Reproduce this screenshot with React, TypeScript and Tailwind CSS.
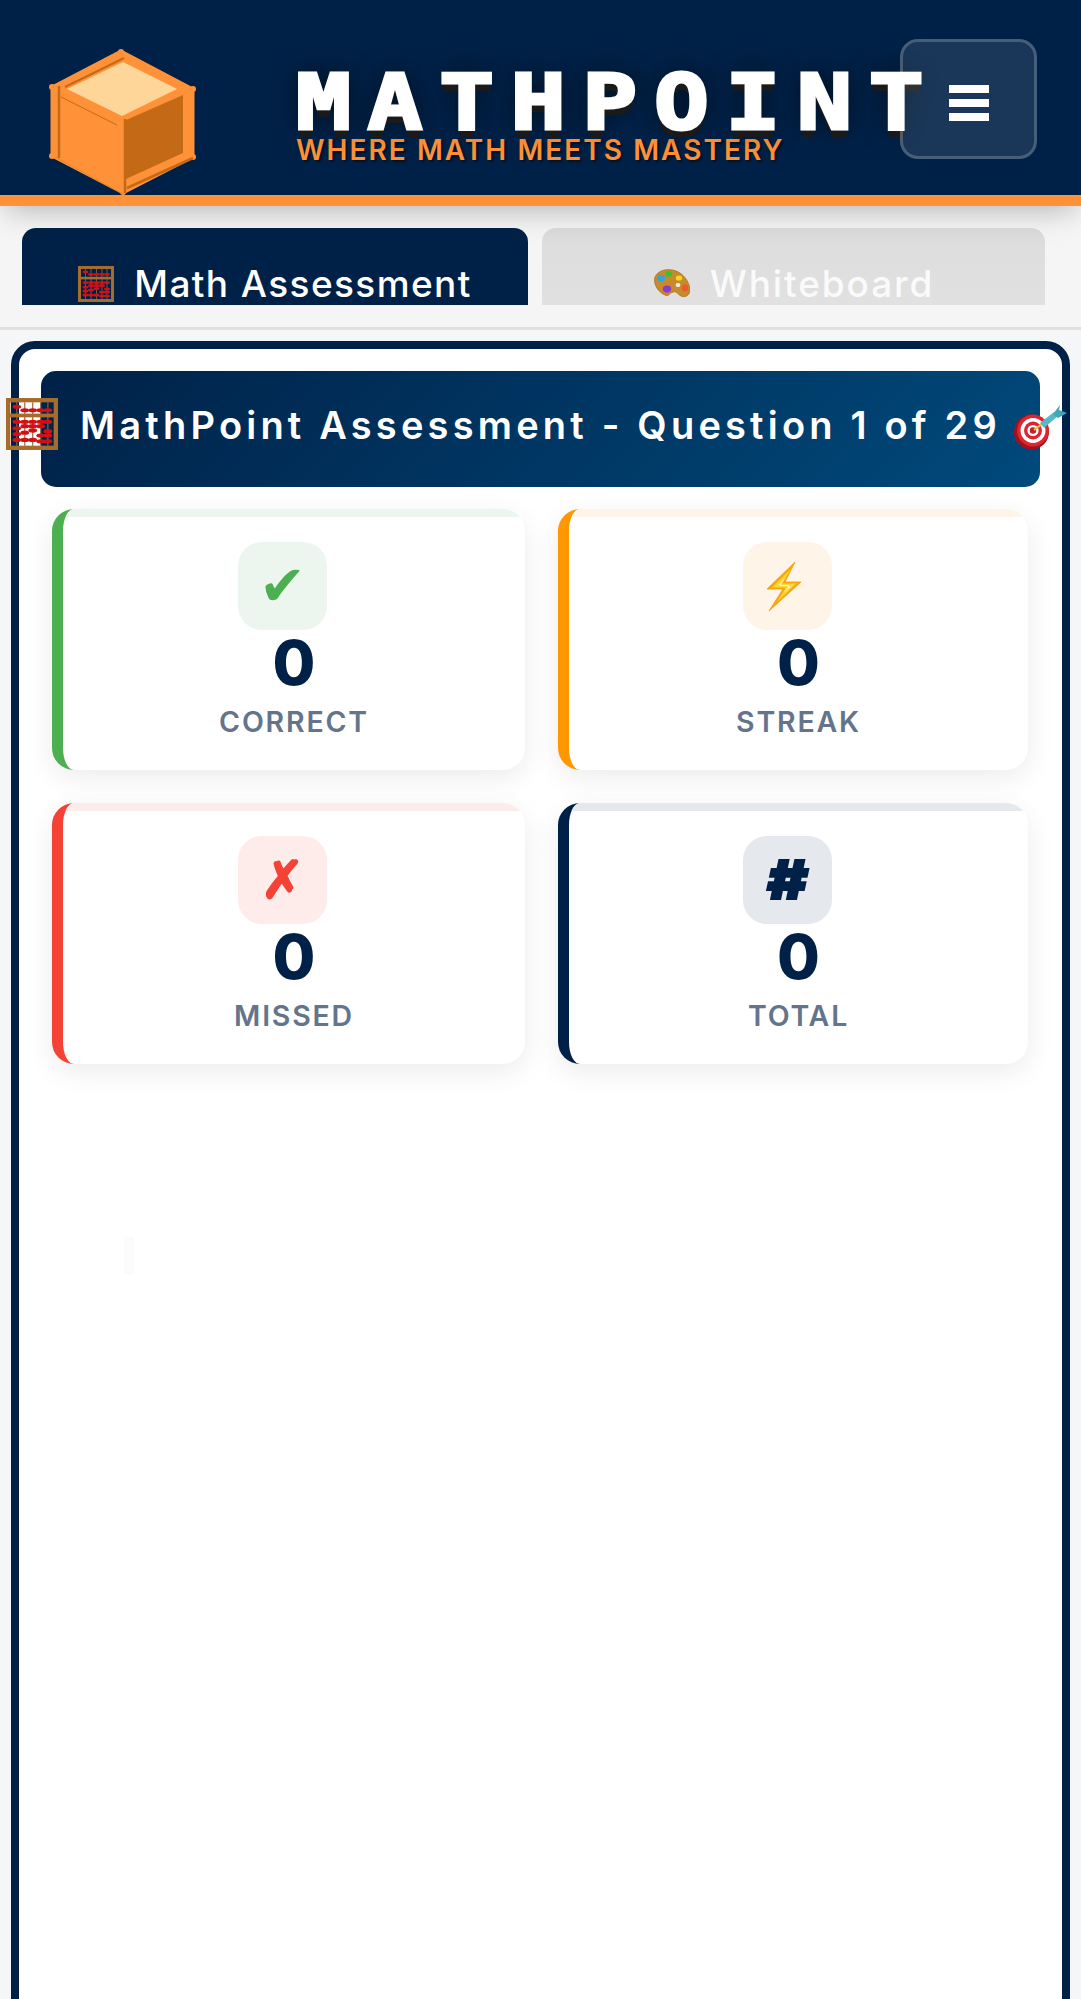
import React from "react";

const sans = "font-['Inter','Noto_Sans',sans-serif]";

function Cube() {
  return (
    <svg viewBox="0 0 148 148" className="w-[148px] h-[148px] block shrink-0">
      <polygon points="72,3 144,41 144,109 74,145 3,108 3,39" fill="#ff9238" stroke="#ff9238" strokeWidth="3" strokeLinejoin="round" />
      <polygon points="18,41 74,14 128,41 73,68" fill="#ffd699" />
      <polygon points="77,72 134,47 134,105 77,131" fill="#c46a17" />
      <circle cx="72" cy="4" r="3" fill="#ff9238" />
      <circle cx="3" cy="39" r="3" fill="#ff9238" />
      <circle cx="144" cy="41" r="3" fill="#ff9238" />
      <circle cx="3" cy="108" r="3" fill="#ff9238" />
      <circle cx="144" cy="109" r="3" fill="#ff9238" />
      <circle cx="74" cy="144" r="3" fill="#ff9238" />
      <g stroke="#c46a17" fill="none">
        <line x1="10" y1="38" x2="10" y2="110" strokeWidth="2.5" />
        <line x1="12" y1="49" x2="68" y2="77" strokeWidth="1" />
        <line x1="76" y1="71" x2="76" y2="145" strokeWidth="2.5" />
        <line x1="78" y1="140" x2="144" y2="110" strokeWidth="2.5" />
        <line x1="6" y1="109" x2="74" y2="146" strokeWidth="1" opacity="0.4" />
        <line x1="16" y1="39" x2="75" y2="10" strokeWidth="2" />
      </g>
    </svg>
  );
}

function Abacus({ size }: { size: number }) {
  const cols = [7.5, 13, 18.5, 24, 29];
  const top = [[6], [8.5], [8.5], [8.5], [8.5]];
  const bottom = [
    [16.5, 21, 25, 29],
    [16.5, 19.5, 24, 29],
    [16.5, 19.5, 22.5, 29],
    [16.5, 19.5, 26, 30],
    [16.5, 23, 26, 30],
  ];
  return (
    <svg viewBox="0 0 36 36" width={size} height={size} className="block">
      {cols.map((x) => (
        <line key={x} x1={x} y1="3" x2={x} y2="33" stroke="#8a6a3a" strokeWidth="0.8" />
      ))}
      {cols.map((x, i) => top[i].map((y) => <ellipse key={`t${x}${y}`} cx={x} cy={y} rx="3" ry="1.4" fill="#d40f14" />))}
      {cols.map((x, i) => bottom[i].map((y) => <ellipse key={`b${x}${y}`} cx={x} cy={y} rx="3" ry="1.5" fill="#d40f14" />))}
      <rect x="1.5" y="1.5" width="33" height="33" fill="none" stroke="#a56c2c" strokeWidth="3" />
      <rect x="1" y="10.8" width="34" height="2.6" fill="#a56c2c" />
    </svg>
  );
}

function Palette() {
  return (
    <svg viewBox="0 0 37 30" width={37} height={30} className="block">
      <path d="M2 8 C5 1 15 -1 23 2 C31 5 36 13 37 20 C37 26 33 29 28 27 C24 25 24 22 20 23 C16 24 16 28 12 26 C5 23 0 15 2 8 Z" fill="#c98a2b" stroke="#a86f1e" strokeWidth="0.8" />
      <ellipse cx="8" cy="9" rx="4" ry="3.2" fill="#2aa8e0" />
      <ellipse cx="16" cy="5" rx="3.4" ry="2.8" fill="#39c02c" />
      <ellipse cx="26" cy="9" rx="3.2" ry="2.6" fill="#f4d91e" />
      <ellipse cx="14" cy="20" rx="4.2" ry="3.4" fill="#8a3bd0" />
      <ellipse cx="32" cy="19" rx="3.2" ry="3.4" fill="#f0582e" />
      <ellipse cx="25" cy="16" rx="2.4" ry="2" fill="#f4f1ea" />
    </svg>
  );
}

function Target() {
  return (
    <svg viewBox="0 0 56 47" width={56} height={47} className="block">
      <circle cx="18.5" cy="27" r="17.5" fill="#a30f1c" />
      <circle cx="20" cy="25.5" r="16" fill="#dc2530" />
      <circle cx="20" cy="25.5" r="12.5" fill="#fff" />
      <circle cx="20" cy="25.5" r="9" fill="#dc2530" />
      <circle cx="20" cy="25.5" r="5.6" fill="#fff" />
      <circle cx="20" cy="25.5" r="3.2" fill="#c81e28" />
      <line x1="21" y1="25" x2="29" y2="19" stroke="#e9c53b" strokeWidth="2" />
      <polygon points="27,18 41,7 45,11 31,23" fill="#56b9c7" />
      <polygon points="40,9 47,0 46,5 54,8 45,13" fill="#3ea6b8" />
    </svg>
  );
}

function Bolt() {
  return (
    <svg viewBox="0 0 36 51" width={36} height={51} className="block mr-[6px]">
      <polygon points="29,1 1,28 17,28 3,50 35,21 19,21" fill="#f8a90f" stroke="#f59a0c" strokeWidth="0.8" />
      <polygon points="25,8 6,26.5 20,26.5 11,41 30,22.5 15.5,22.5" fill="#ffd83a" />
      <polygon points="21,15 13,24 23,24 19,31 25,25 14,25" fill="#fff2c4" />
    </svg>
  );
}

type Stat = {
  label: string;
  border: string;
  stripe: string;
  icon: React.ReactNode;
};

function StatCard({ label, border, stripe, icon }: Stat) {
  return (
    <div className={`relative overflow-hidden rounded-[22px] border-l-[11px] bg-white shadow-[0_8px_28px_rgba(0,0,0,0.08)] h-[261px] pt-[33px] flex flex-col items-center ${border}`}>
      <div className={`absolute left-0 right-0 top-0 h-[8px] ${stripe}`} />
      <div className={`w-[89px] h-[88px] rounded-[24px] mr-[23px] flex items-center justify-center shrink-0 ${stripe}`}>{icon}</div>
      <div className={`${sans} font-extrabold text-[62px] leading-[66px] text-[#002147]`}>0</div>
      <div className={`${sans} font-semibold text-[28.5px] leading-[34px] mt-[9px] tracking-[1.8px] text-[#64748b]`}>{label}</div>
    </div>
  );
}

export default function App() {
  return (
    <div className={`h-[1999px] overflow-hidden bg-[#f5f6f8] ${sans}`}>
      <header className="relative z-10 h-[206px] bg-[#002147] border-b-[11px] border-[#ff9238] shadow-[0_8px_30px_-6px_rgba(0,0,0,0.3)] flex items-start pl-[49px]">
        <div className="mt-[48px]">
          <Cube />
        </div>
        <div className="ml-[99px] mt-[72px] flex flex-col">
          <div className="origin-left scale-x-[1.2] font-['DejaVu_Sans_Mono',monospace] font-bold text-[76px] leading-[62px] tracking-[13.9px] text-white [-webkit-text-stroke:3px_white] [text-shadow:0_8px_0_#1a1a1a,0_0_24px_rgba(0,0,0,0.6)] whitespace-nowrap">
            MATHPOINT
          </div>
          <div className="text-[28px] leading-[32px] font-semibold tracking-[2.05px] text-[#ff9238] [text-shadow:2px_2px_2px_rgba(0,0,0,0.5)] whitespace-nowrap">
            WHERE MATH MEETS MASTERY
          </div>
        </div>
        <button className="absolute left-[900px] top-[39px] w-[137px] h-[120px] rounded-[18px] border-[3px] border-white/20 bg-white/10 flex items-center justify-center">
          <span className="flex flex-col gap-[6px] mt-[8px]">
            <span className="block w-[40px] h-[8px] bg-white" />
            <span className="block w-[40px] h-[8px] bg-white" />
            <span className="block w-[40px] h-[8px] bg-white" />
          </span>
        </button>
      </header>

      <nav className="h-[124px] bg-[#f5f5f5] border-b-[3px] border-[#e0e0e0] pt-[22px] pl-[22px] flex gap-[14px] items-start">
        <div className="w-[506px] h-[77px] rounded-t-[14px] bg-[#002147] flex items-center justify-center gap-[20px] pt-[34px] text-white font-medium text-[37px] leading-[43px] tracking-[1.4px] whitespace-nowrap">
          <Abacus size={36} />
          <span>Math Assessment</span>
        </div>
        <div className="w-[503px] h-[77px] rounded-t-[14px] bg-gradient-to-b from-[#dcdcdc] to-[#e1e1e1] flex items-center justify-center gap-[20px] pt-[34px] text-[#fafafa] font-medium text-[37px] leading-[43px] tracking-[1.9px] whitespace-nowrap">
          <Palette />
          <span>Whiteboard</span>
        </div>
      </nav>

      <main className="mt-[11px] mx-[11px] h-[1700px] bg-white border-[8px] border-[#002147] rounded-[24px] px-[22px] pt-[22px]">
        <div className="relative h-[116px] rounded-[15px] bg-[linear-gradient(135deg,#002147,#004a7c)] flex items-center justify-center pb-[8px]">
          <span className="text-white font-semibold text-[38px] tracking-[4.2px] whitespace-nowrap">
            MathPoint Assessment - Question 1 of 29
          </span>
          <span className="absolute left-[-35px] top-[27px]">
            <Abacus size={52} />
          </span>
          <span className="absolute left-[972px] top-[34px]">
            <Target />
          </span>
        </div>

        <div className="mt-[22px] ml-[11px] grid grid-cols-[473px_470px] gap-[33px]">
          <StatCard
            label="CORRECT"
            border="border-[#4caf50]"
            stripe="bg-[#edf6ee]"
            icon={<span className="font-['DejaVu_Sans',sans-serif] font-bold text-[56px] leading-none text-[#4caf50]">✔</span>}
          />
          <StatCard label="STREAK" border="border-[#ff9800]" stripe="bg-[#fff4e8]" icon={<Bolt />} />
          <StatCard
            label="MISSED"
            border="border-[#f44336]"
            stripe="bg-[#feecea]"
            icon={<span className="font-['DejaVu_Sans',sans-serif] font-bold text-[52px] leading-none text-[#f44336] [-webkit-text-stroke:2px_#f44336]">✗</span>}
          />
          <StatCard
            label="TOTAL"
            border="border-[#002147]"
            stripe="bg-[#e5e8ed]"
            icon={<span className="inline-block scale-x-[1.15] font-black italic text-[54px] leading-none text-[#002147] [-webkit-text-stroke:2px_#002147]">#</span>}
          />
        </div>

        <div className="mt-[173px] ml-[83px] w-[10px] h-[37px] bg-[#fbfbfb]" />
      </main>
    </div>
  );
}
